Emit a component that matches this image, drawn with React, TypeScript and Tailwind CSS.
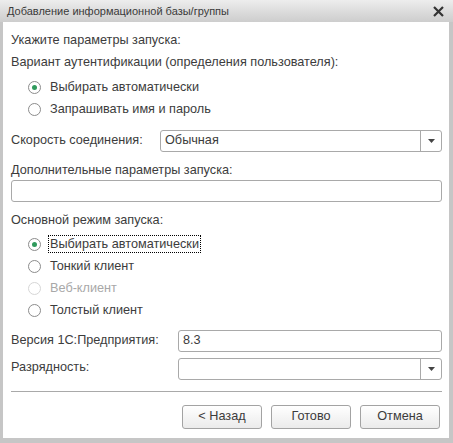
import React from "react"

const font = { fontFamily: '"Liberation Sans", Arial, sans-serif' }

function Radio({ label, checked, disabled, focused, className = "" }: { label: string; checked?: boolean; disabled?: boolean; focused?: boolean; className?: string }) {
  return (
    <div className={"flex h-[22px] items-center pl-[17px] " + className}>
      <span
        className={
          "flex h-[13px] w-[13px] items-center justify-center rounded-full border bg-white " +
          (disabled ? "border-[#d6d6d6]" : "border-[#8c8c8c]")
        }
      >
        {checked && <span className="h-[5px] w-[5px] rounded-full bg-[#2f9a5c]" />}
      </span>
      <span
        className={
          "ml-[7px] px-[1px] leading-[16px] " +
          (focused ? "border border-dotted border-black " : "border border-transparent ") +
          (disabled ? "text-[#a8a8a8]" : "text-[#3c3c3c]")
        }
      >
        {label}
      </span>
    </div>
  )
}

function Field({ value, combo }: { value?: string; combo?: boolean }) {
  return (
    <div className="flex h-[22px] flex-1 items-stretch rounded-[3px] border border-[#a9a9a9] bg-white">
      <div className="flex flex-1 items-center pl-[4px] text-[#3c3c3c]">{value}</div>
      {combo && (
        <div className="flex w-[21px] items-center justify-center border-l border-[#a9a9a9]">
          <svg width="7" height="4" viewBox="0 0 7 4">
            <path d="M0 0H7L3.5 4Z" fill="#444" />
          </svg>
        </div>
      )}
    </div>
  )
}

function Button({ label }: { label: string }) {
  return (
    <button className="h-[24px] w-[80px] rounded-[3px] border border-[#a3a3a3] bg-gradient-to-b from-white to-[#ebebeb] text-[12.7px] text-[#3c3c3c]">
      {label}
    </button>
  )
}

export default function App() {
  return (
    <div className="flex h-[443px] w-[453px] flex-col bg-[#c6c6c6] text-[12.7px]" style={font}>
      {/* Title bar */}
      <div className="flex h-[22px] items-center justify-between bg-gradient-to-b from-[#ededed] to-[#cdcdcd] pl-[7px] pr-[9px]">
        <span className="text-[11px] text-[#3a3a3a]">Добавление информационной базы/группы</span>
        <svg width="11" height="11" viewBox="0 0 11 11">
          <path d="M1 1L10 10M10 1L1 10" stroke="#333" strokeWidth="2.2" />
        </svg>
      </div>

      {/* Body */}
      <div className="mb-[5px] ml-[3px] mr-[4px] flex flex-1 flex-col bg-white pl-[8px] pr-[7px] pt-[8px] text-[#3c3c3c]">
        <div className="flex h-[22px] items-center">Укажите параметры запуска:</div>
        <div className="flex h-[22px] items-center">Вариант аутентификации (определения пользователя):</div>
        <Radio label="Выбирать автоматически" checked className="mt-[2px]" />
        <Radio label="Запрашивать имя и пароль" />

        <div className="mt-[10px] flex items-center">
          <span className="w-[149px]">Скорость соединения:</span>
          <Field value="Обычная" combo />
        </div>

        <div className="mt-[10px] flex h-[18px] items-center">Дополнительные параметры запуска:</div>
        <div className="flex">
          <Field />
        </div>

        <div className="mt-[8px] flex h-[22px] items-center">Основной режим запуска:</div>
        <Radio label="Выбирать автоматически" checked focused className="mt-[1px]" />
        <Radio label="Тонкий клиент" />
        <Radio label="Веб-клиент" disabled />
        <Radio label="Толстый клиент" />

        <div className="mt-[9px] flex items-center">
          <span className="w-[167px]">Версия 1С:Предприятия:</span>
          <Field value="8.3" />
        </div>
        <div className="mt-[6px] flex items-center">
          <span className="w-[167px] self-start">Разрядность:</span>
          <Field combo />
        </div>

        <div className="mt-[11px] h-px bg-[#a9a9a9]" />

        <div className="mt-[13px] flex justify-end gap-[9px] pr-[2px]">
          <Button label="< Назад" />
          <Button label="Готово" />
          <Button label="Отмена" />
        </div>
      </div>
    </div>
  )
}
